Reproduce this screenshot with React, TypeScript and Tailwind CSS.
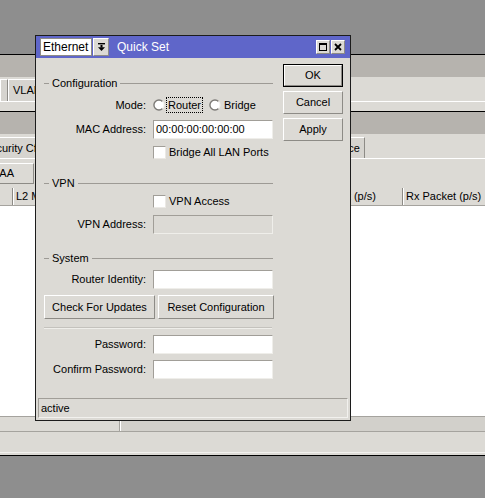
import type { ReactNode } from "react";

const LIGHT = "bg-[#dcdad5]";

function Radio() {
  return (
    <svg width="12" height="12" viewBox="0 0 12 12" className="shrink-0">
      <circle cx="6" cy="6" r="5" fill="#fff" />
      <path d="M9.5 2.5 A5 5 0 1 0 9.5 9.5" stroke="#7d7b77" strokeWidth="1.4" fill="none" />
      <path d="M9.5 9.5 A5 5 0 0 0 9.5 2.5" stroke="#f4f3f0" strokeWidth="1.2" fill="none" />
    </svg>
  );
}

function Checkbox() {
  return (
    <div className="w-[13px] h-[13px] shrink-0 bg-white border border-[#a19e98] border-r-[#ebe9e5] border-b-[#ebe9e5]" />
  );
}

function GroupHeader({ title }: { title: string }) {
  return (
    <div className="flex items-center h-[14px]">
      <div className="w-[5px] h-px bg-[#9d9a95]" />
      <span className="px-[3px] leading-none">{title}</span>
      <div className="flex-1 h-px bg-[#9d9a95]" />
    </div>
  );
}

function Field({ label, value, disabled, mt }: { label: string; value?: string; disabled?: boolean; mt: string }) {
  return (
    <div className={`flex items-center h-[19px] ${mt}`}>
      <span className="w-[102px] text-right leading-none whitespace-nowrap">{label}</span>
      <div
        className={`ml-[7px] w-[120px] h-[19px] flex items-center px-[2px] border border-[#a19e98] border-r-[#efeeea] border-b-[#efeeea] ${
          disabled ? LIGHT : "bg-white"
        }`}
      >
        {value}
      </div>
    </div>
  );
}

function Btn({ children, className = "" }: { children?: ReactNode; className?: string }) {
  return (
    <div
      className={`flex items-center justify-center shrink-0 ${LIGHT} border border-white border-r-[#8d8b86] border-b-[#8d8b86] ${className}`}
    >
      {children}
    </div>
  );
}

function Tab({ children, className = "" }: { children?: ReactNode; className?: string }) {
  return (
    <div
      className={`h-full shrink-0 flex items-center whitespace-nowrap border-l border-t border-white border-r border-r-[#8d8b86] bg-[#d6d4cf] ${className}`}
    >
      {children}
    </div>
  );
}

export default function App() {
  return (
    <div
      className="relative w-[485px] h-[498px] overflow-hidden bg-[#8e8e8e] text-[11px] text-black"
      style={{ fontFamily: '"Liberation Sans", Arial, sans-serif' }}
    >
      {/* Background window */}
      <div className="flex flex-col h-full">
        <div className="h-[54px] bg-[#8e8e8e]" />
        <div className="h-px bg-black" />
        <div className="h-[22px] bg-[#b6b3ae]" />
        <div className={`h-[24px] ${LIGHT} flex items-end`}>
          <div className="flex h-[22px]">
            <Tab className="w-[8px]" />
            <Tab className="w-[80px] pl-[4px]">VLAN</Tab>
          </div>
        </div>
        <div className="h-px bg-white" />
        <div className={`h-[9px] ${LIGHT}`} />
        <div className="h-px bg-black" />
        <div className="h-[22px] bg-[#b6b3ae]" />
        <div className={`h-[24px] ${LIGHT} flex items-end`}>
          <div className="flex h-[21px] w-full">
            <Tab className="w-[84px] ml-[-22px] pl-[4px]">Security Cfg.</Tab>
            <Tab className="w-[236px]" />
            <Tab className="w-[67px] justify-end pr-[4px]">Interface</Tab>
          </div>
        </div>
        <div className="h-px bg-white" />
        <div className={`h-[29px] ${LIGHT} flex items-center`}>
          <Btn className="w-[62px] h-[21px] ml-[-28px]">AAA</Btn>
        </div>
        <div className={`h-[18px] ${LIGHT} flex border-b border-[#a5a39e]`}>
          <div className="w-[13px] shrink-0 border-r border-[#8d8b86]" />
          <div className="w-[286px] shrink-0 pl-[2px] border-l border-white border-r border-r-[#8d8b86] flex items-center">L2 MTU</div>
          <div className="w-[104px] shrink-0 pl-[2px] border-l border-white border-r border-r-[#8d8b86] flex items-center whitespace-nowrap">Tx Packet (p/s)</div>
          <div className="flex-1 pl-[2px] border-l border-white flex items-center whitespace-nowrap">Rx Packet (p/s)</div>
        </div>
        <div className="flex-1 bg-white" />
        <div className={`h-[15px] ${LIGHT} flex border-t border-[#a5a39e]`}>
          <div className="w-[120px] border-r border-[#a5a39e]" />
          <div className="flex-1 border-l border-white bg-[#d2d0cb]" />
        </div>
        <div className="h-px bg-[#a5a39e]" />
        <div className={`h-[20px] ${LIGHT}`} />
        <div className="h-px bg-[#f2f1ee]" />
        <div className={`h-[2px] ${LIGHT}`} />
        <div className="h-px bg-black" />
        <div className="h-[42px] bg-[#8e8e8e]" />
      </div>

      {/* Quick Set dialog */}
      <div className={`absolute left-[35px] top-[35px] w-[316px] h-[386px] border border-[#1c1c1c] ${LIGHT} flex flex-col`}>
        <div className="h-[22px] bg-[#5f66c9] flex items-center pl-[4px] pr-[5px]">
          <div className="w-[52px] h-[18px] bg-white border border-[#8d8b86] flex items-center pl-[2px] text-[12px]">Ethernet</div>
          <Btn className="w-[16px] h-[18px] ml-[1px]">
            <svg width="7" height="8" viewBox="0 0 7 8">
              <rect x="0" y="0" width="7" height="1.4" fill="#000" />
              <rect x="2.5" y="2" width="2" height="2.5" fill="#000" />
              <polygon points="0,4.2 7,4.2 3.5,8" fill="#000" />
            </svg>
          </Btn>
          <span className="ml-[8px] text-white text-[12px]">Quick Set</span>
          <div className="flex-1" />
          <Btn className="w-[14px] h-[14px]">
            <div className="w-[8px] h-[8px] border border-black border-t-2" />
          </Btn>
          <Btn className="w-[14px] h-[14px] ml-[1px]">
            <svg width="8" height="8" viewBox="0 0 8 8">
              <path d="M1 1 L7 7 M7 1 L1 7" stroke="#000" strokeWidth="1.8" />
            </svg>
          </Btn>
        </div>

        <div className="flex-1 flex pl-[8px]">
          <div className="w-[229px] flex flex-col pt-[18px]">
            <GroupHeader title="Configuration" />
            <div className="flex items-center h-[16px] mt-[7px]">
              <span className="w-[102px] text-right leading-none">Mode:</span>
              <div className="ml-[7px] flex items-center">
                <Radio />
                <span className="ml-[1px] px-[1px] h-[16px] flex items-center border border-dotted border-black leading-none">Router</span>
                <div className="ml-[6px]">
                  <Radio />
                </div>
                <span className="ml-[3px] leading-none">Bridge</span>
              </div>
            </div>
            <Field label="MAC Address:" value="00:00:00:00:00:00" mt="mt-[7px]" />
            <div className="flex items-center h-[14px] mt-[6px] pl-[109px]">
              <Checkbox />
              <span className="ml-[3px] leading-none">Bridge All LAN Ports</span>
            </div>

            <div className="mt-[17px]">
              <GroupHeader title="VPN" />
            </div>
            <div className="flex items-center h-[14px] mt-[4px] pl-[109px]">
              <Checkbox />
              <span className="ml-[3px] leading-none">VPN Access</span>
            </div>
            <Field label="VPN Address:" disabled mt="mt-[7px]" />

            <div className="mt-[17px]">
              <GroupHeader title="System" />
            </div>
            <Field label="Router Identity:" mt="mt-[5px]" />
            <div className="flex h-[24px] mt-[6px] gap-[3px]">
              <Btn className="w-[111px] h-full">Check For Updates</Btn>
              <Btn className="w-[116px] h-full">Reset Configuration</Btn>
            </div>
            <div className="mt-[8px] w-[228px] h-px bg-[#c4c2bd]" />
            <div className="w-[228px] h-px bg-[#efeeea]" />
            <Field label="Password:" mt="mt-[6px]" />
            <Field label="Confirm Password:" mt="mt-[6px]" />
          </div>

          <div className="ml-[10px] w-[60px] flex flex-col pt-[6px] gap-[4px]">
            <div className="h-[23px] border border-black">
              <Btn className="w-full h-full">OK</Btn>
            </div>
            <Btn className="h-[23px]">Cancel</Btn>
            <Btn className="h-[23px]">Apply</Btn>
          </div>
        </div>

        <div className="mx-[2px] mb-[2px] h-[20px] flex items-center pl-[2px] border border-[#a19e98] border-r-[#f2f1ee] border-b-[#f2f1ee]">
          active
        </div>
      </div>
    </div>
  );
}
